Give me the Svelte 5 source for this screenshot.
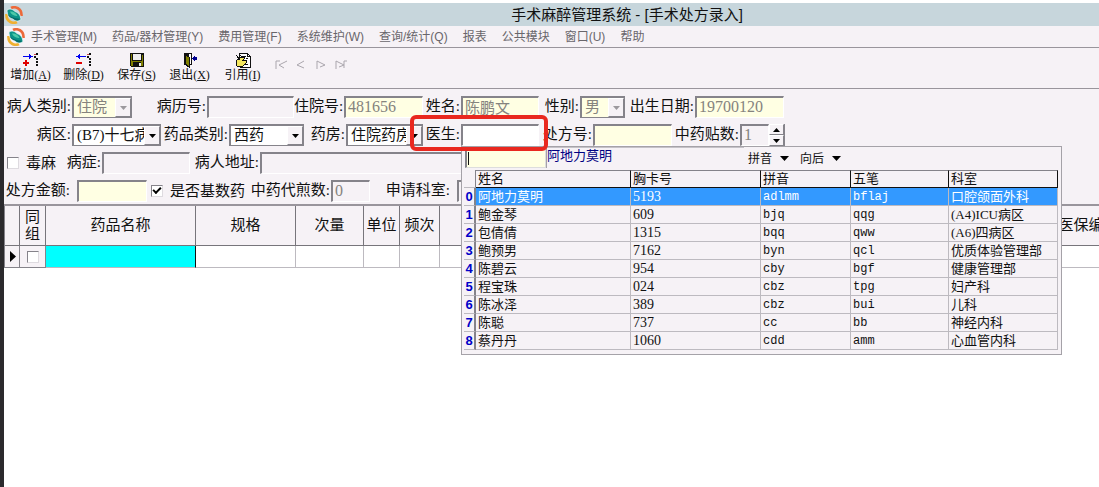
<script>
	const menus = ['手术管理(M)', '药品/器材管理(Y)', '费用管理(F)', '系统维护(W)', '查询/统计(Q)', '报表', '公共模块', '窗口(U)', '帮助'];

	const tools = [
		{ icon: 'add', text: '增加', key: 'A' },
		{ icon: 'remove', text: '删除', key: 'D' },
		{ icon: 'save', text: '保存', key: 'S' },
		{ icon: 'exit', text: '退出', key: 'X' },
		{ icon: 'quote', text: '引用', key: 'I' }
	];

	const steps = [
		{ name: '首条', d: 'M1 1v8M1 1h4M12 1L4 5l5 3' },
		{ name: '上一条', d: 'M9 1L2 5l7 3' },
		{ name: '下一条', d: 'M2 9V1l8 4-5 2' },
		{ name: '末条', d: 'M1 9V1l8 4-5 2M9 8V1h3' }
	];

	const doctors = [
		['阿地力莫明', '5193', 'adlmm', 'bflaj', '口腔颌面外科'],
		['鲍金琴', '609', 'bjq', 'qqg', '(A4)ICU病区'],
		['包倩倩', '1315', 'bqq', 'qww', '(A6)四病区'],
		['鲍预男', '7162', 'byn', 'qcl', '优质体验管理部'],
		['陈碧云', '954', 'cby', 'bgf', '健康管理部'],
		['程宝珠', '024', 'cbz', 'tpg', '妇产科'],
		['陈冰泽', '389', 'cbz', 'bui', '儿科'],
		['陈聪', '737', 'cc', 'bb', '神经内科'],
		['蔡丹丹', '1060', 'cdd', 'amm', '心血管内科']
	];

	let selected = $state(0);
	let patches = $state(1);
	let stock = $state(true);
	let toxic = $state(false);
	let grouped = $state(false);
</script>

{#snippet logo()}
	<svg class="logo" width="18" height="18" viewBox="0 0 18 18" aria-hidden="true">
		<path d="M6 2C10 0 17 2 16.500 10" fill="none" stroke="#ec6a3a" stroke-width="2.600" />
		<path d="M1.500 8C1 16 8 18 12 16" fill="none" stroke="#f0b030" stroke-width="2.600" />
		<path d="M2 4C5 2 8 3.500 10 5.500 14 7 15.500 9.500 16 13.500 13 16 10 15 8 13 4 11.500 2 9 2 4z" fill="#0b9488" stroke="#eef3f2" stroke-width="0.800" />
		<path d="M3 8c2 3 6 4 12 5-2 2-5 1.500-7-.500C5 11.500 3 10 3 8z" fill="#086a68" />
		<path d="M5 5.500c3-.500 6 1 7.500 4.500C9.500 10 6.500 9 5 5.500z" fill="#4cc9a8" />
	</svg>
{/snippet}

{#snippet down()}
	<svg class="down" width="9" height="5" viewBox="0 0 9 5" aria-hidden="true"><path d="M0 0h9L4.500 5z" /></svg>
{/snippet}

{#snippet combo(id, value, off)}
	<div class="combo" class:off>
		<select {id} disabled={off}><option>{value}</option></select>
		<span class="drop">
			<svg width="7" height="4" viewBox="0 0 7 4" aria-hidden="true"><path d="M0 0h7L3.500 4z" /></svg>
		</span>
	</div>
{/snippet}

<div class="window">
	<header class="titlebar">
		{@render logo()}
		<h1>手术麻醉管理系统 - [手术处方录入]</h1>
	</header>

	<nav class="menubar">
		{@render logo()}
		{#each menus as menu}
			<button>{menu}</button>
		{/each}
	</nav>

	<div class="toolbar">
		{#each tools as tool}
			<button class="tool">
				<svg width="18" height="16" viewBox="0 0 18 16" shape-rendering="crispEdges" aria-hidden="true">
					{#if tool.icon === 'add' || tool.icon === 'remove'}
						{#if tool.icon === 'add'}
							<path d="M1 4h6V2h1v1h1v1h2v1H9v1H8v1H7V5H1z" fill="#0000f0" />
							<path d="M3 8h2v2h2v2H5v2H3v-2H1v-2h2z" fill="#e00000" />
						{:else}
							<path d="M11 4H5V2H4v1H3v1H1v1h2v1h1v1h1V5h6z" fill="#0000f0" />
							<path d="M1 10h6v2H1z" fill="#e00000" />
						{/if}
						<path d="M14 1h2v2h-2zM12 4h2v2h-2zM14 6h2v2h-2zM14 9h2v2h-2zM14 12h2v2h-2z" fill="#111" />
						<path d="M12 2h2v1h-2z" fill="#c44" />
					{:else if tool.icon === 'save'}
						<path d="M2 1h14v14H3l-1-1z" fill="#111" />
						<path d="M3 2h1v7h10V3h1v11H3z" fill="#808000" />
						<path d="M5 2h8v6H5z" fill="#eee" />
						<path d="M5 10h8v4H5z" fill="#111" />
						<path d="M11 11h2v3h-2z" fill="#eee" />
					{:else if tool.icon === 'exit'}
						<path d="M3 1h8v12H3z" fill="#111" />
						<path d="M8 2h2v10H8z" fill="#fff" />
						<path d="M4 2l4 3v10l-4-3z" fill="#808000" stroke="#111" />
						<path d="M11 6h2V4h1v1h1v1h1v1h-1v1h-1v1h-1V7h-2z" fill="#000090" />
						<path d="M12 5h4v3h-4z" fill="#000090" />
					{:else}
						<path d="M5 1h8l3 3v11H6z" fill="#fff" stroke="#111" />
						<path d="M8 4h4M12 6h2M11 12h3M13 1v3h3" fill="none" stroke="#111" />
						<path d="M2 9l4-3 4-1 1 1-2 2h3v3l-3 3-5 1-2-2z" fill="#f4e75e" stroke="#111" />
						<path d="M2 3l4 5M5 2l4 4" stroke="#111" />
					{/if}
				</svg>
				<span>{tool.text}(<u>{tool.key}</u>)</span>
			</button>
		{/each}
		<div class="steps">
			{#each steps as step}
				<button disabled aria-label={step.name}>
					<svg width="13" height="10" viewBox="0 0 13 10" aria-hidden="true"><path d={step.d} /></svg>
				</button>
			{/each}
		</div>
	</div>

	<form class="form" onsubmit={(e) => e.preventDefault()}>
		<div class="row patient">
			<label for="kind">病人类别:</label>
			{@render combo('kind', '住院', true)}
			<label for="record">病历号:</label>
			<input id="record" disabled />
			<label for="inpatient">住院号:</label>
			<input id="inpatient" class="cream" value="481656" disabled />
			<label for="name">姓名:</label>
			<input id="name" class="cream" value="陈鹏文" disabled />
			<label for="sex">性别:</label>
			{@render combo('sex', '男', true)}
			<label for="birth">出生日期:</label>
			<input id="birth" class="cream" value="19700120" disabled />
		</div>

		<div class="row order">
			<label for="ward">病区:</label>
			{@render combo('ward', '(B7)十七病区', false)}
			<label for="drugkind">药品类别:</label>
			{@render combo('drugkind', '西药', false)}
			<label for="pharmacy">药房:</label>
			{@render combo('pharmacy', '住院药房', false)}
			<label for="doctor">医生:</label>
			<input id="doctor" class="plain" />
			<label for="rx">处方号:</label>
			<input id="rx" class="cream" />
			<label for="patches">中药贴数:</label>
			<div class="spin">
				<input id="patches" value={patches} disabled />
				<button type="button" aria-label="增加贴数" onclick={() => patches++}>
					<svg width="7" height="4" viewBox="0 0 7 4"><path d="M0 4h7L3.500 0z" /></svg>
				</button>
				<button type="button" aria-label="减少贴数" onclick={() => patches--}>
					<svg width="7" height="4" viewBox="0 0 7 4"><path d="M0 0h7L3.500 4z" /></svg>
				</button>
			</div>
		</div>

		<div class="row illness">
			<label class="check"><input type="checkbox" bind:checked={toxic} />毒麻</label>
			<label for="symptom">病症:</label>
			<input id="symptom" disabled />
			<label for="address">病人地址:</label>
			<input id="address" disabled />
		</div>

		<div class="row amount">
			<label class="loose" for="total">处方金额:</label>
			<input id="total" class="cream" />
			<label class="check"><input type="checkbox" bind:checked={stock} />是否基数药</label>
			<label for="decoct">中药代煎数:</label>
			<input id="decoct" value="0" disabled />
			<label class="loose" for="dept">申请科室:</label>
			<input id="dept" disabled />
		</div>

		<div class="marker"></div>

		<div class="lookup">
			<div class="search">
				<input aria-label="检索医生" />
				<output>{doctors[selected][0]}</output>
				<button type="button">拼音{@render down()}</button>
				<button type="button">向后{@render down()}</button>
			</div>
			<table>
				<colgroup>
					<col class="c-no" /><col class="c-name" /><col class="c-card" /><col class="c-py" /><col class="c-wb" /><col />
				</colgroup>
				<thead>
					<tr><td></td><th>姓名</th><th>胸卡号</th><th>拼音</th><th>五笔</th><th>科室</th></tr>
				</thead>
				<tbody>
					{#each doctors as doctor, i}
						<tr class:selected={i === selected} onclick={() => (selected = i)}>
							<th scope="row">{i}</th>
							<td>{doctor[0]}</td>
							<td class="num">{doctor[1]}</td>
							<td class="code">{doctor[2]}</td>
							<td class="code">{doctor[3]}</td>
							<td>{doctor[4]}</td>
						</tr>
					{/each}
				</tbody>
			</table>
		</div>
	</form>

	<main class="drugs">
		<table>
			<colgroup>
				<col class="d-mark" /><col class="d-group" /><col class="d-name" /><col class="d-spec" />
				<col class="d-dose" /><col class="d-unit" /><col class="d-freq" /><col /><col class="d-code" />
			</colgroup>
			<thead>
				<tr>
					<td></td><th>同<br />组</th><th>药品名称</th><th>规格</th><th>次量</th><th>单位</th><th>频次</th><td></td><th>医保编码</th>
				</tr>
			</thead>
			<tbody>
				<tr>
					<td class="mark"><svg width="6" height="11" viewBox="0 0 6 11" aria-hidden="true"><path d="M0 0l6 5.500L0 11z" /></svg></td>
					<td class="group"><input type="checkbox" aria-label="同组" bind:checked={grouped} /></td>
					<td class="active"></td><td></td><td></td><td></td><td></td><td></td><td></td>
				</tr>
			</tbody>
		</table>
	</main>
</div>

<style>
	:global(body) {
		background: #fff;
		overflow: hidden;
	}

	.window {
		--panel: #f6f2f6;
		--cream: #ffffe3;
		--edge: #85838a;
		min-height: 100vh;
		box-sizing: border-box;
		padding-top: 3px;
		border-left: 4px solid #2b2a2d;
		font-family: 'Liberation Serif', 'Noto Sans CJK SC', serif;
		font-size: 15px;
		color: #111;
		overflow: hidden;
	}

	button, input, select { font: inherit; color: inherit; margin: 0; box-sizing: border-box; }
	button { border: 0; padding: 0; background: none; }

	.titlebar {
		display: flex;
		align-items: center;
		height: 23px;
		padding-left: 1px;
		background: #c7d6dc;
	}
	.titlebar h1 {
		flex: 1;
		margin: 0;
		padding-left: 132px;
		text-align: center;
		font: 15px/23px 'Liberation Sans', 'Noto Sans CJK SC', sans-serif;
		white-space: pre;
	}
	.logo { flex: none; }

	.menubar {
		display: flex;
		align-items: center;
		gap: 15px;
		height: 21px;
		padding-left: 3px;
		background: var(--panel);
		border-bottom: 1px solid #99959c;
	}
	.menubar .logo { margin-right: -9px; }
	.menubar button {
		font: 12px/18px 'Liberation Sans', 'Noto Sans CJK SC', sans-serif;
		color: #69666b;
		white-space: nowrap;
	}

	.toolbar {
		display: flex;
		align-items: flex-start;
		height: 40px;
		background: var(--panel);
		border-bottom: 1px solid #99959c;
	}
	.tool {
		display: flex;
		flex-direction: column;
		align-items: center;
		width: 53px;
		padding-top: 4px;
		font-size: 12px;
		line-height: 14px;
	}
	.steps { display: flex; gap: 7px; padding: 12px 0 0 6px; }
	.steps button { display: flex; }
	.steps path { fill: none; stroke: #aaa6ad; }

	.form {
		position: relative;
		display: flex;
		flex-direction: column;
		gap: 6px;
		padding: 7px 0 2px 1px;
		background: var(--panel);
		line-height: 20px;
		border-bottom: 2px solid #99959c;
	}
	.row { display: grid; height: 22px; }
	.patient { grid-template-columns: 67px 60px 75px 87px 50px 79px 38px 78px 41px 45px 70px 89px; }
	.order { grid-template-columns: 67px 89px 68px 75px 42px 77px 38px 78px 54px 79px 68px 45px; }
	.illness { grid-template-columns: 54px 43px 88px 70px 480px; }
	.amount { grid-template-columns: 72px 70px 97px 87px 39px 87px 100px; }

	.row label { text-align: right; white-space: nowrap; padding-right: 1px; }
	.row .loose { padding-right: 7px; }
	.row .check { display: flex; align-items: center; gap: 7px; padding-left: 2px; }
	.amount .check { padding-left: 4px; }

	.row input:not([type='checkbox']), .combo {
		min-width: 0;
		width: 100%;
		height: 22px;
		padding: 0 2px 2px;
		border: 1px solid #fff;
		border-top: 2px solid var(--edge);
		border-left: 2px solid var(--edge);
		border-radius: 0;
		background: var(--panel);
		outline: 0;
		font-size: 16px;
	}
	.row input:disabled { color: #85837e; }
	.row .cream:not([type='checkbox']) { background: var(--cream); }
	.row .plain:not([type='checkbox']) { background: #fff; }
	.row #name:disabled { font-size: 15px; line-height: 17px; }

	.combo {
		display: grid;
		grid-template-columns: 1fr 16px;
		box-sizing: border-box;
		padding: 0;
		background: #fff;
		border-right-color: var(--edge);
		border-bottom-color: var(--edge);
	}
	.combo.off { background: var(--cream); }
	.combo select {
		appearance: none;
		min-width: 0;
		width: 100%;
		height: 19px;
		padding: 0 0 0 3px;
		border: 0;
		background: none;
		font-size: 15px;
		line-height: 19px;
		opacity: 1;
		overflow: hidden;
		text-overflow: clip;
	}
	.combo.off select { color: #85837e; }
	.drop {
		display: grid;
		place-items: center;
		background: var(--panel);
		border: 1px solid #fff;
		border-right-color: var(--edge);
		border-bottom-color: var(--edge);
		pointer-events: none;
	}
	.off .drop { fill: #9c999e; }

	.spin {
		display: grid;
		grid-template: 11px 11px / 1fr 15px;
		border-right: 1px solid var(--edge);
	}
	.row .spin input { grid-row: span 2; }
	.spin button {
		display: grid;
		place-items: center;
		background: var(--panel);
		border: 1px solid var(--edge);
		border-top-color: #fff;
		border-left-color: #fff;
	}

	input[type='checkbox'] {
		appearance: none;
		flex: none;
		display: grid;
		place-items: center;
		width: 12px;
		height: 12px;
		background: #fff;
		border: 1px solid #dedbe0;
		border-top-color: var(--edge);
		border-left-color: var(--edge);
	}
	input[type='checkbox']:checked::before {
		content: '';
		width: 6px;
		height: 3px;
		margin-bottom: 3px;
		border: solid #000;
		border-width: 0 0 2px 2px;
		transform: rotate(-45deg);
	}

	.marker {
		position: absolute;
		z-index: 3;
		left: 406px;
		top: 26px;
		width: 138px;
		height: 36px;
		box-sizing: border-box;
		border: 4px solid #e9281f;
		border-radius: 6px;
		pointer-events: none;
	}

	.lookup {
		position: absolute;
		z-index: 2;
		left: 457px;
		top: 57px;
		width: 601px;
		box-sizing: border-box;
		padding: 0 3px 4px 2px;
		background: var(--panel);
		border: 1px solid #a5a2a8;
		font-size: 13px;
	}
	.search { display: flex; height: 23px; }
	.search input {
		width: 81px;
		height: 21px;
		margin-left: 1px;
		border: 1px solid #ddd;
		border-left: 2px solid var(--edge);
		background: linear-gradient(#111, #111) 1px 4px / 1px 13px no-repeat var(--cream);
		outline: 0;
	}
	.search output {
		width: 197px;
		height: 20px;
		line-height: 16px;
		color: #000082;
		border-top: 1px solid #c5c2c8;
		border-left: 1px solid #a5a2a8;
	}
	.search button {
		display: flex;
		align-items: center;
		gap: 8px;
		width: 52px;
		font-size: 12px;
	}
	.search button:first-of-type { margin-left: 4px; }

	.lookup table {
		width: 100%;
		table-layout: fixed;
		border-collapse: separate;
		border-spacing: 0;
		line-height: 17px;
	}
	.c-no { width: 12px; }
	.c-name { width: 155px; }
	.c-card { width: 130px; }
	.c-py { width: 90px; }
	.c-wb { width: 98px; }
	.lookup th, .lookup td {
		height: 17px;
		padding: 0 0 0 2px;
		text-align: left;
		font-weight: 400;
		white-space: nowrap;
		border: 0 solid #bdbac0;
		border-width: 0 1px 1px 0;
	}
	.lookup thead th {
		height: 16px;
		line-height: 16px;
		border-color: #111;
		border-top: 1px solid var(--edge);
	}
	.lookup thead td { border-right: 1px solid var(--edge); }
	.lookup tbody th {
		padding: 0;
		text-align: center;
		font: bold 13px/17px 'Liberation Sans', sans-serif;
		color: #0000c8;
		border-right: 2px solid var(--edge);
	}
	.lookup .num { font-size: 14px; }
	.lookup .code {
		height: 15px;
		padding-top: 2px;
		font: 12px/15px 'Liberation Mono', monospace;
	}
	.lookup .selected td { background: #3399ff; color: #fff; }

	.drugs { overflow: hidden; }
	.drugs table {
		width: 1130px;
		table-layout: fixed;
		border-collapse: separate;
		border-spacing: 0;
		border-left: 1px solid var(--edge);
	}
	.d-mark { width: 15px; }
	.d-group { width: 26px; }
	.d-name { width: 150px; }
	.d-spec { width: 100px; }
	.d-dose { width: 68px; }
	.d-unit { width: 36px; }
	.d-freq { width: 40px; }
	.d-code { width: 90px; }
	.drugs th, .drugs td {
		box-sizing: border-box;
		height: 22px;
		padding: 0;
		border: 0 solid #bdbac0;
		border-width: 0 1px 1px 0;
	}
	.drugs thead th, .drugs thead td {
		height: 40px;
		background: var(--panel);
		border-color: #77757b;
		font-weight: 400;
		line-height: 17px;
		white-space: nowrap;
	}
	.drugs .mark, .drugs .group { background: var(--panel); border-color: var(--edge); line-height: 0; }
	.drugs .mark { padding-left: 5px; }
	.drugs .group { padding-left: 7px; }
	.drugs .active { background: #00ffff; border-right-color: #111; }
</style>
